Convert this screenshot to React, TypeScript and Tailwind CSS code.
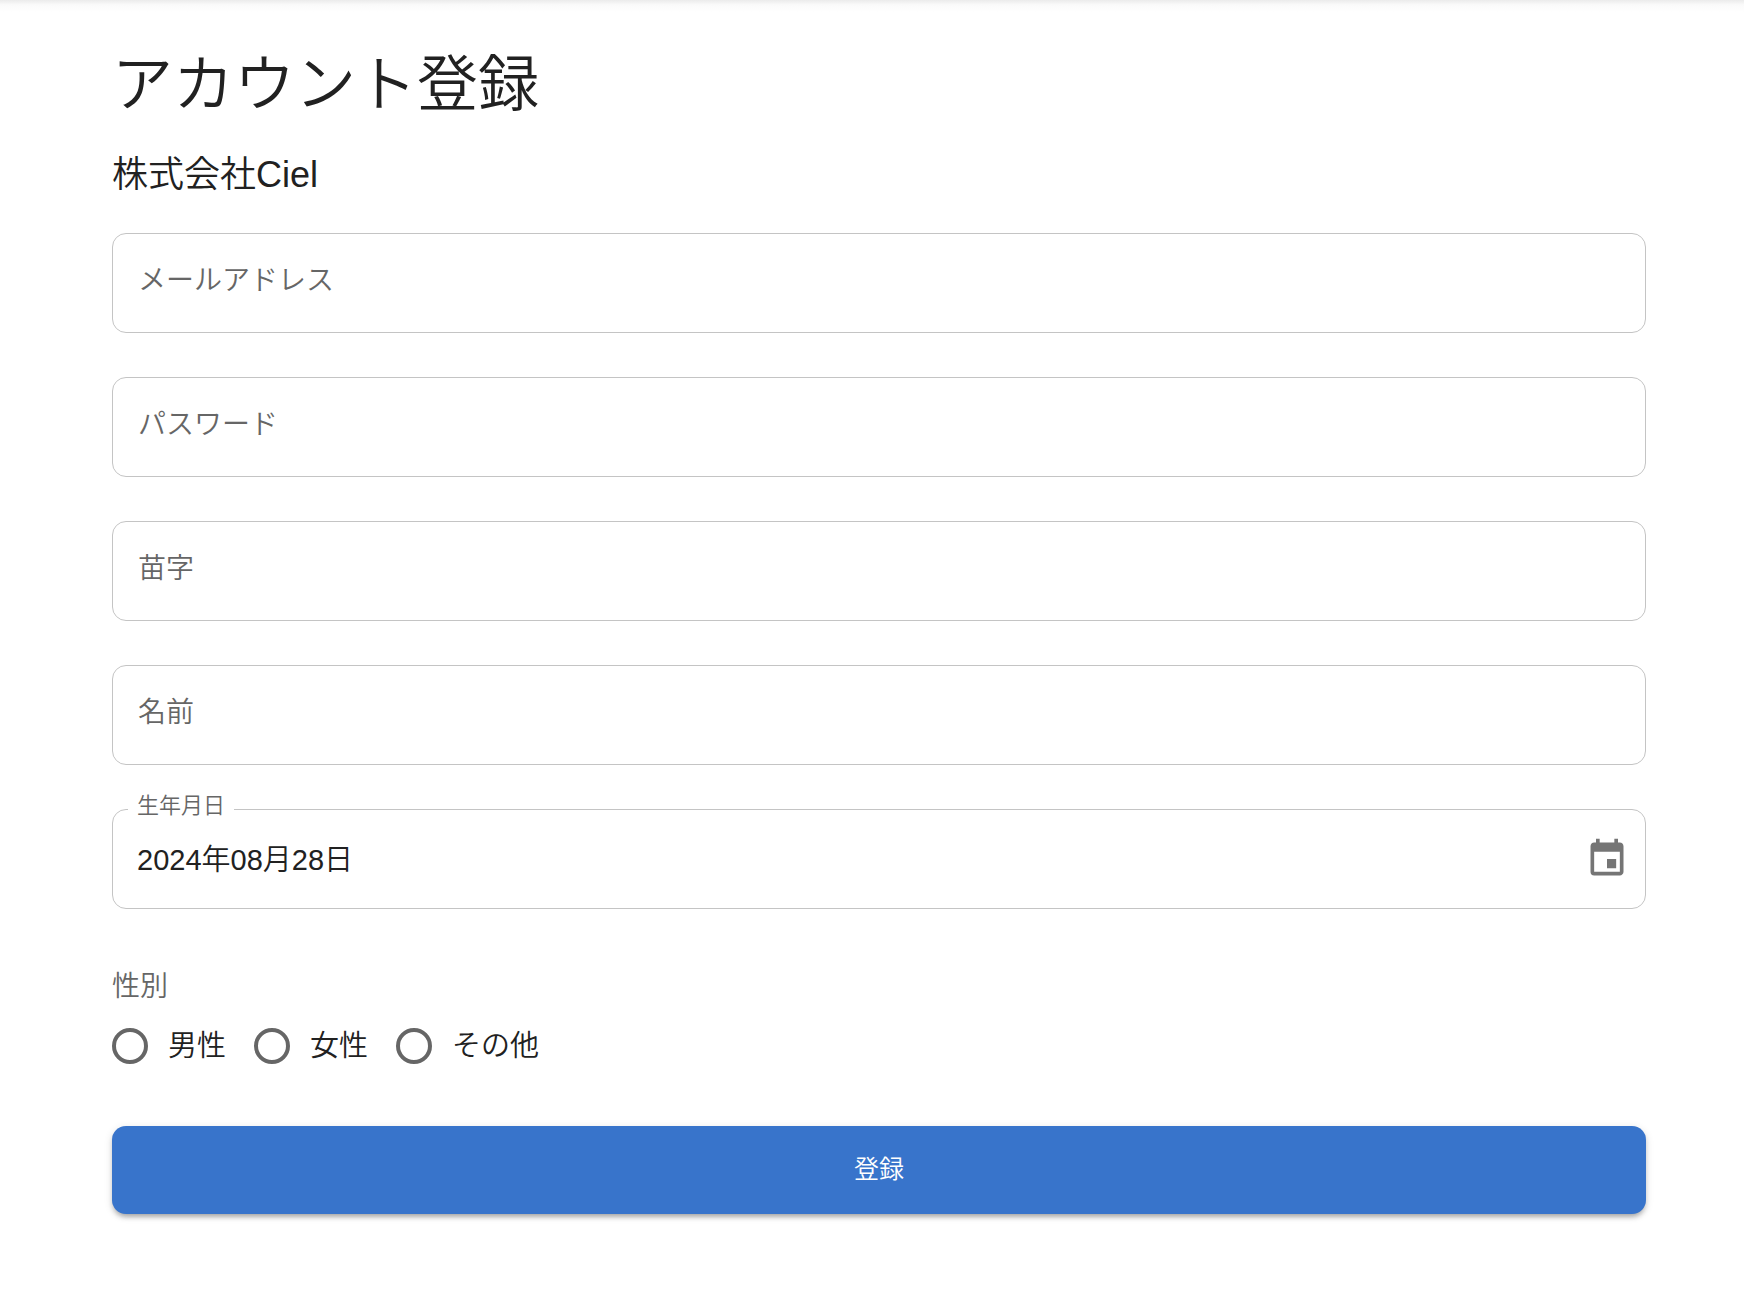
import React, { useState } from 'react';
import { MdEvent } from 'react-icons/md';

interface TextFieldProps {
  id: string;
  label: string;
  type?: string;
}

const TextField: React.FC<TextFieldProps> = ({ id, label, type = 'text' }) => {
  const [value, setValue] = useState('');

  return (
    <div className="relative">
      <input
        id={id}
        type={type}
        value={value}
        onChange={(e) => setValue(e.target.value)}
        placeholder=" "
        className="peer block h-[100px] w-full rounded-[14px] border border-[#c4c4c4] bg-transparent px-6 text-[28px] outline-none focus:border-[#3874cb]"
      />
      <label
        htmlFor={id}
        className="pointer-events-none absolute top-7 left-[26px] hidden text-[28px] leading-10 text-[#666666] peer-placeholder-shown:block"
      >
        {label}
      </label>
    </div>
  );
};

const genders = [
  { value: 'male', label: '男性' },
  { value: 'female', label: '女性' },
  { value: 'other', label: 'その他' },
];

export const App: React.FC = () => {
  const [birthday, setBirthday] = useState('2024年08月28日');
  const [gender, setGender] = useState('');

  return (
    <div className="bg-white font-['Liberation_Sans','Noto_Sans_CJK_JP',sans-serif] font-[350] text-[#212121]">
      {/* Shadow under the app bar */}
      <div className="h-3 bg-linear-to-b from-[#ebebeb] via-[#fafafa] via-40% to-white" />

      <main className="pt-[37px] pr-[98px] pb-24 pl-28">
        <h1 className="text-[61px] leading-[72px] font-[350]">アカウント登録</h1>
        <h2 className="mt-7 text-[36px] leading-[52px] font-[350]">株式会社Ciel</h2>

        <form onSubmit={(e) => e.preventDefault()} className="mt-8">
          <div className="flex flex-col gap-11">
            <TextField id="email" label="メールアドレス" type="email" />
            <TextField id="password" label="パスワード" type="password" />
            <TextField id="lastName" label="苗字" />
            <TextField id="firstName" label="名前" />

            <div className="relative flex h-[100px] items-center rounded-[14px] border border-[#c4c4c4] pr-4 pl-6">
              <label
                htmlFor="birthday"
                className="absolute -top-[18px] left-[15px] bg-white px-[9px] text-[22px] leading-7 text-[#666666]"
              >
                生年月日
              </label>
              <input
                id="birthday"
                type="text"
                value={birthday}
                onChange={(e) => setBirthday(e.target.value)}
                className="h-full min-w-0 flex-1 bg-transparent pb-1 text-[29px] outline-none"
              />
              <button type="button" aria-label="日付を選択" className="text-[#757575]">
                <MdEvent className="size-11" />
              </button>
            </div>
          </div>

          <fieldset className="mt-[58px]">
            <legend className="text-[28px] leading-10 text-[#666666]">性別</legend>
            <div className="mt-[19px] flex gap-7">
              {genders.map((g) => (
                <label key={g.value} className="flex items-center gap-5 text-[29px] leading-10">
                  <input
                    type="radio"
                    name="gender"
                    value={g.value}
                    checked={gender === g.value}
                    onChange={() => setGender(g.value)}
                    className="size-9 appearance-none rounded-full border-4 border-[#666666] checked:border-[10px] checked:border-[#3874cb]"
                  />
                  {g.label}
                </label>
              ))}
            </div>
          </fieldset>

          <button
            type="submit"
            className="mt-15 h-[88px] w-full rounded-[14px] bg-[#3874cb] text-[25px] text-white shadow-[0_5px_4px_-4px_rgba(0,0,0,0.2),0_4px_4px_0_rgba(0,0,0,0.14),0_2px_9px_0_rgba(0,0,0,0.12)]"
          >
            登録
          </button>
        </form>
      </main>
    </div>
  );
};

export default App;
